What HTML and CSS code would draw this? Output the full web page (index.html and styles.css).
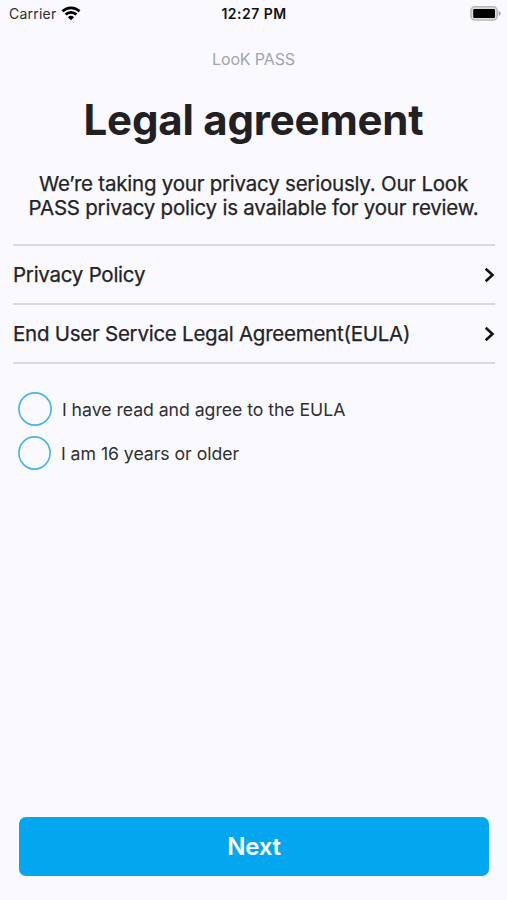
FILE: index.html
```html
<!DOCTYPE html>
<html lang="en">
<head>
<meta charset="utf-8">
<title>Legal agreement</title>
<link rel="stylesheet" href="styles.css">
</head>
<body>
<div class="screen">
  <header class="status">
    <div class="carrier"><span>Carrier</span>
      <svg class="wifi" width="20" height="15" viewBox="0 0 20 15" fill="none" stroke="#000"><path d="M1.500 5.200a12.300 12.300 0 0 1 17 0M4.600 8.500a7.800 7.800 0 0 1 10.800 0" stroke-width="2.700"/><path d="M10 14.300 6.900 11.200a4.500 4.500 0 0 1 6.200 0z" fill="#000" stroke="none"/></svg>
    </div>
    <div class="time">12:27 PM</div>
    <svg class="battery" width="31" height="15" viewBox="0 0 31 15"><rect x="1" y=".8" width="26.200" height="13.200" rx="4" fill="#dededf" stroke="#b9b9bb" stroke-width="1.600"/><rect x="3.200" y="2.900" width="21.800" height="9" rx="1.200"/><path d="M28.600 5c1.600.6 2.200 1.400 2.200 2.400s-.6 1.800-2.200 2.400z" fill="#a8a8aa"/></svg>
  </header>
  <div class="brand">LooK PASS</div>
  <h1 class="title">Legal agreement</h1>
  <p class="intro">We’re taking your privacy seriously. Our Look<br>PASS privacy policy is available for your review.</p>
  <nav class="links">
    <a class="row"><span>Privacy Policy</span><svg class="chevron" width="11" height="16" viewBox="0 0 11 16"><path d="M1.700 1.700 8.500 8 1.700 14.300"/></svg></a>
    <a class="row"><span>End User Service Legal Agreement(EULA)</span><svg class="chevron" width="11" height="16" viewBox="0 0 11 16"><path d="M1.700 1.700 8.500 8 1.700 14.300"/></svg></a>
  </nav>
  <div class="checks">
    <label class="check"><svg class="circle" width="34" height="34" viewBox="0 0 34 34"><circle cx="17" cy="17" r="16.100"/></svg><span>I have read and agree to the EULA</span></label>
    <label class="check"><svg class="circle" width="33" height="34" viewBox="0 0 33 34"><ellipse cx="16.500" cy="17" rx="15.600" ry="16.100"/></svg><span>I am 16 years or older</span></label>
  </div>
  <button class="next">Next</button>
</div>
</body>
</html>
```
FILE: styles.css
```css
* { box-sizing: border-box; }
body { margin: 0; background: #f9f9fe; color: #242426; font-family: Inter, "Liberation Sans", sans-serif; }
.screen { height: 900px; display: flex; flex-direction: column; }
.status { height: 27px; display: grid; grid-template-columns: 1fr auto 1fr; align-items: center; padding: 0 6px 0 9px; font-size: 14px; }
.carrier { display: flex; align-items: center; gap: 5px; color: #2c2c2e; letter-spacing: 0.220px; }
.time { font-weight: 600; color: #111; font-size: 14px; letter-spacing: 0.480px; position: relative; left: -1px; }
.battery { justify-self: end; }
.brand { margin-top: 22px; line-height: 20px; font-size: 16px; letter-spacing: -0.120px; text-align: center; color: #a1a5ad; }
.title { margin: 26px 0 0; line-height: 50px; font-size: 42px; font-weight: 700; letter-spacing: -0.200px; text-align: center; color: #222022; }
.intro { margin: 27px 0 0; line-height: 24px; font-size: 20.500px; letter-spacing: -0.220px; text-align: center; white-space: nowrap; -webkit-text-stroke: 0.250px #242426; }
.links { margin: 24px 12px 0 13px; border-top: 2px solid #dadade; }
.row { height: 59px; border-bottom: 2px solid #dadade; display: flex; align-items: center; justify-content: space-between; font-size: 20.500px; letter-spacing: -0.250px; -webkit-text-stroke: 0.250px #242426; }
.chevron { fill: none; stroke: #111; stroke-width: 2.600px; }
.checks { margin: 28px 0 0 18px; display: flex; flex-direction: column; gap: 10px; }
.check { display: flex; align-items: center; gap: 10px; font-size: 17.700px; letter-spacing: -0.050px; height: 34px; color: #303032; }
.circle { fill: none; stroke: #41b5e9; stroke-width: 1.600px; }
.next { margin: auto 18px 24px 19px; height: 59px; border: 0; border-radius: 7px; background: #03a7f0; color: #fff; font: 600 24px Inter, sans-serif; letter-spacing: -0.200px; }
```
